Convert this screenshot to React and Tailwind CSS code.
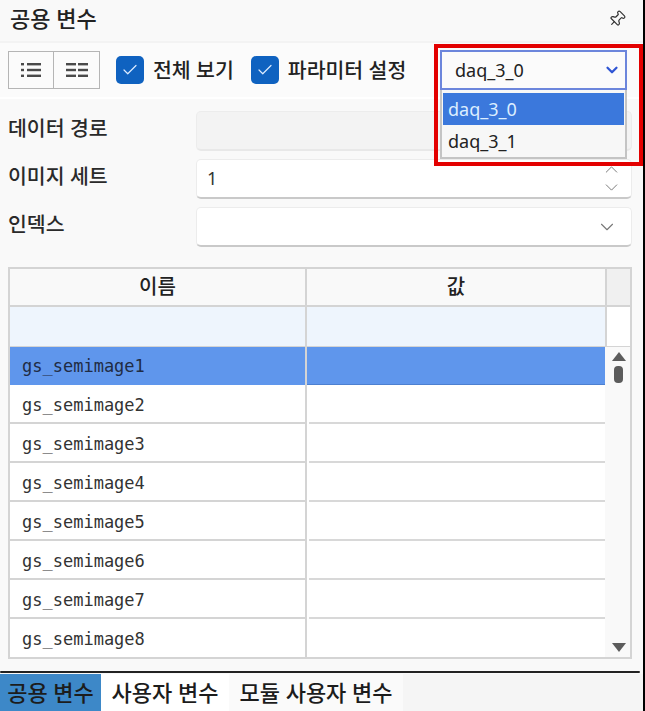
import React from 'react';
import { Check, ChevronDown, ChevronUp, Pin } from 'lucide-react';

const sans = 'font-["Noto_Sans","Noto_Sans_CJK_KR",sans-serif]';

const rows = ['gs_semimage1', 'gs_semimage2', 'gs_semimage3', 'gs_semimage4', 'gs_semimage5', 'gs_semimage6', 'gs_semimage7', 'gs_semimage8'];

const ListIcon = () => (
  <svg width="20" height="16" viewBox="0 0 20 16" className="text-[#4a4a4a]">
    <g fill="currentColor">
      <rect x="0" y="1" width="3" height="2.4" />
      <rect x="0" y="6.8" width="3" height="2.4" />
      <rect x="0" y="12.6" width="3" height="2.4" />
      <rect x="6" y="1" width="14" height="2.4" />
      <rect x="6" y="6.8" width="14" height="2.4" />
      <rect x="6" y="12.6" width="14" height="2.4" />
    </g>
  </svg>
);

const ColumnsIcon = () => (
  <svg width="22" height="16" viewBox="0 0 22 16" className="text-[#4a4a4a]">
    <g fill="currentColor">
      <rect x="0" y="1" width="10" height="2.4" />
      <rect x="0" y="6.8" width="10" height="2.4" />
      <rect x="0" y="12.6" width="10" height="2.4" />
      <rect x="12" y="1" width="10" height="2.4" />
      <rect x="12" y="6.8" width="10" height="2.4" />
      <rect x="12" y="12.6" width="10" height="2.4" />
    </g>
  </svg>
);

const CheckItem = ({ label, className }) => (
  <div className={`flex items-center gap-[9px] ${className}`}>
    <span className="w-[28px] h-[28px] rounded-[5px] bg-[#0f62c0] flex items-center justify-center">
      <Check className="w-[18px] h-[18px] text-[#dcebff]" strokeWidth={1.6} />
    </span>
    <span className="text-[20.5px] font-medium text-[#222] whitespace-nowrap">{label}</span>
  </div>
);

const FormRow = ({ label, children, bg = 'bg-white', shadow = 'border-b-2 border-b-[#c9c9c9]' }) => (
  <div className="flex">
    <div className="w-[188px] text-[20.5px] font-medium text-[#2a2a2a] pt-[3px] leading-[28px]">{label}</div>
    <div className={`w-[436px] h-[40px] rounded-[5px] border border-[#ececec] ${shadow} ${bg} flex items-center justify-between pl-[10px] pr-[14px]`}>
      {children}
    </div>
  </div>
);

const App = () => {
  return (
    <div className={`relative w-[645px] h-[711px] overflow-hidden flex bg-[#f9f9f9] ${sans}`}>
      <div className="w-[643px] flex flex-col">
        <div className="h-[41px] flex items-center justify-between pl-[10px] pr-[17px] pb-[4px]">
          <h1 className="text-[22px] font-medium text-[#222]">공용 변수</h1>
          <Pin className="w-[18px] h-[18px] rotate-45 text-[#333]" strokeWidth={1.6} />
        </div>

        <div className="h-[56px] flex items-center bg-[#fbfbfb] border-t-2 border-[#f3f3f3] pl-[8px]">
          <div className="flex h-[38px] border border-[#b5b5b5]">
            <button className="w-[45px] flex items-center justify-center border-r border-[#b5b5b5]">
              <ListIcon />
            </button>
            <button className="w-[45px] flex items-center justify-center">
              <ColumnsIcon />
            </button>
          </div>
          <CheckItem label="전체 보기" className="ml-[16px]" />
          <CheckItem label="파라미터 설정" className="ml-[17px]" />
          <div className="ml-auto mr-[16px] w-[187px] h-[40px] border-2 border-[#6c86dc] flex items-center justify-between pl-[13px] pr-[4px] text-[18px] text-[#222]">
            <span>daq_3_0</span>
            <ChevronDown className="w-[18px] h-[18px] text-[#2f55d4]" strokeWidth={3} />
          </div>
        </div>

        <div className="flex flex-col gap-[8px] pl-[8px] pt-[12px] border-t-2 border-white">
          <FormRow label="데이터 경로" bg="bg-[#f3f3f3]" shadow="border-b-2 border-b-[#e8e8e8]" />
          <FormRow label="이미지 세트">
            <span className="text-[18px] text-[#333]">1</span>
            <span className="flex flex-col -space-y-[3px] -mr-[5px] text-[#777]">
              <ChevronUp className="w-[21px] h-[21px]" strokeWidth={1.1} />
              <ChevronDown className="w-[21px] h-[21px]" strokeWidth={1.1} />
            </span>
          </FormRow>
          <FormRow label="인덱스">
            <span />
            <ChevronDown className="w-[22px] h-[22px] mr-[-1px] text-[#777]" strokeWidth={1.2} />
          </FormRow>
        </div>

        <div className="ml-[8px] mt-[20px] w-[624px] h-[392px] shrink-0 border-2 border-[#d4d4d4] bg-white flex flex-col">
          <div className="flex h-[38px] shrink-0 border-b-2 border-[#d4d4d4] bg-[#f9f9f9] text-[20px] font-medium text-[#222]">
            <div className="w-[297px] flex items-center justify-center border-r-2 border-[#d4d4d4]">이름</div>
            <div className="w-[300px] flex items-center justify-center border-r-2 border-[#d4d4d4]">값</div>
            <div className="flex-1 bg-[#f0f0f0]" />
          </div>
          <div className="flex h-[40px] shrink-0 border-b border-[#d4d4d4]">
            <div className="w-[297px] bg-[#eef5fd] border-r-2 border-[#d4d4d4]" />
            <div className="w-[300px] bg-[#eef5fd] border-r-2 border-[#d4d4d4]" />
            <div className="flex-1" />
          </div>
          <div className="flex flex-1 min-h-0">
            <div className="w-[595px] flex flex-col font-['DejaVu_Sans_Mono',monospace] text-[17px] text-[#333]">
              {rows.map((name, i) =>
                i === 0 ? (
                  <div key={name} className="flex h-[38px] shrink-0 bg-[#5f96ec]">
                    <div className="w-[297px] flex items-center pl-[12px] pt-[2px] border-r-2 border-[#d4d4d4] text-[#1f2c44]">{name}</div>
                    <div className="flex-1 border-b border-[#4d80d0]" />
                  </div>
                ) : (
                  <div key={name} className={`flex shrink-0 ${i === 7 ? 'h-[38px]' : 'h-[39px]'}`}>
                    <div className={`w-[297px] flex items-center pl-[12px] border-r-2 border-[#d4d4d4] ${i === 7 ? 'pt-[3px]' : 'pt-[5px] border-b-2'}`}>{name}</div>
                    <div className={`flex-1 ml-[2px] ${i === 7 ? '' : 'border-b-2 border-[#d8d8d8]'}`} />
                  </div>
                )
              )}
            </div>
            <div className="flex-1 bg-[#f9f9f9] border-l-2 border-transparent flex flex-col items-center justify-between pt-[5px] pb-[5px]">
              <div className="flex flex-col items-center gap-[5px]">
                <svg width="14" height="9" viewBox="0 0 14 9"><path d="M7 0 L14 9 L0 9 Z" fill="#5c5c5c" /></svg>
                <div className="w-[9px] h-[17px] rounded-[4px] bg-[#5c5c5c]" />
              </div>
              <svg width="14" height="9" viewBox="0 0 14 9"><path d="M0 0 L14 0 L7 9 Z" fill="#5c5c5c" /></svg>
            </div>
          </div>
        </div>

        <div className="mt-[12px] h-[2px] shrink-0 bg-[#222] mr-[3px] rounded-full" />
        <div className="mt-[1px] flex flex-1 text-[22px] font-medium text-[#1c1c1c] bg-[#f5f5f5]">
          <div className="w-[101px] bg-[#3d88c8] flex items-center justify-center whitespace-nowrap">공용 변수</div>
          <div className="w-[128px] bg-white flex items-center justify-center whitespace-nowrap">사용자 변수</div>
          <div className="w-[174px] bg-[#fafafa] flex items-center justify-center whitespace-nowrap">모듈 사용자 변수</div>
        </div>
      </div>
      <div className="w-[2px] bg-black" />

      {/* open dropdown + red annotation sit on top of the form */}
      <div className="absolute left-[440px] top-[90px] w-[187px] h-[69px] bg-[#f7f7f7] border-2 border-t-0 border-[#c4c4c4] pt-[3px] px-[1px] text-[18px] text-[#222]">
        <div className="h-[32px] bg-[#3b78dc] text-[#dceeff] pl-[5px] flex items-center">daq_3_0</div>
        <div className="h-[32px] pl-[5px] flex items-center">daq_3_1</div>
      </div>
      <div className="absolute left-[434px] top-[44px] w-[209px] h-[122px] border-[4px] border-[#e30000] pointer-events-none" />
    </div>
  );
};

export default App;
